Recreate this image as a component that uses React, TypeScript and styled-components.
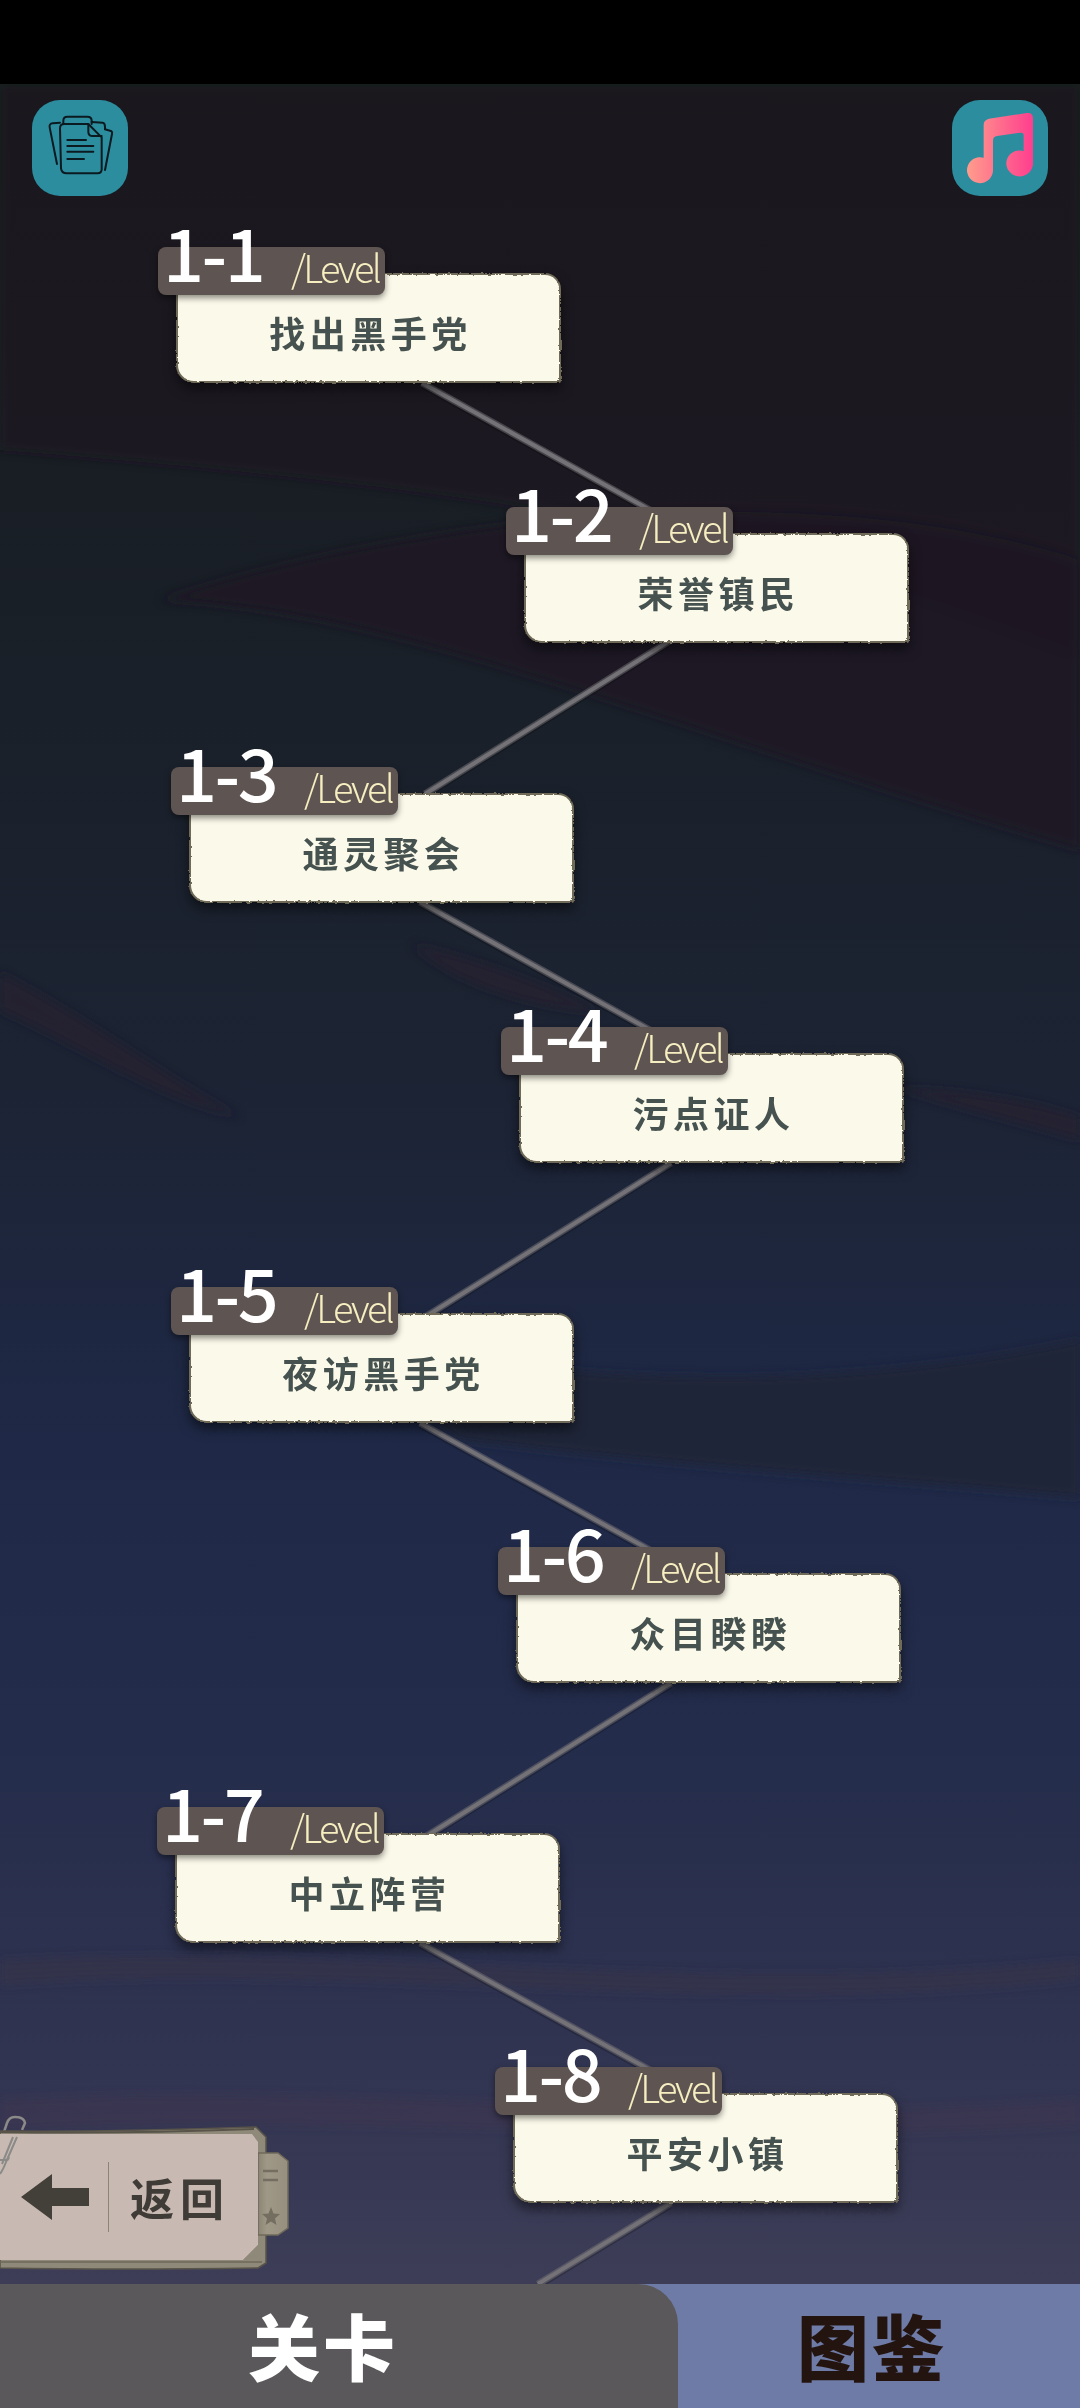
import React from "react";
import styled, { createGlobalStyle } from "styled-components";

const cjk = `"Noto Sans CJK SC", "Noto Sans", sans-serif`;

interface ILevel {
	code: string;
	title: string;
	offset: number;
}

const levels: ILevel[] = [
	{ code: "1-1", title: "找出黑手党", offset: 176 },
	{ code: "1-2", title: "荣誉镇民", offset: 524 },
	{ code: "1-3", title: "通灵聚会", offset: 189 },
	{ code: "1-4", title: "污点证人", offset: 519 },
	{ code: "1-5", title: "夜访黑手党", offset: 189 },
	{ code: "1-6", title: "众目睽睽", offset: 516 },
	{ code: "1-7", title: "中立阵营", offset: 175 },
	{ code: "1-8", title: "平安小镇", offset: 513 },
];

const links = [
	[422, 383, 650, 510],
	[671, 640, 425, 794],
	[420, 902, 650, 1030],
	[671, 1163, 425, 1317],
	[420, 1423, 650, 1550],
	[671, 1683, 425, 1837],
	[420, 1943, 650, 2070],
	[671, 2203, 538, 2284],
];

const GlobalStyle = createGlobalStyle`
	html, body {
		margin: 0;
		padding: 0;
		background: #000;
	}
`;

const Page = styled.div`
	width: 1080px;
	height: 2408px;
	display: grid;
	grid-template-rows: 84px 1fr 124px;
	overflow: hidden;
	font-family: ${cjk};
`;

const StatusBar = styled.div`
	background: #000;
`;

const MapArea = styled.div`
	position: relative;
	overflow: hidden;
	background: linear-gradient(
		180deg,
		#151c1c 0%,
		#181d22 12%,
		#1a2029 28%,
		#1c2333 45%,
		#1f2947 62%,
		#232c4b 75%,
		#2f3350 88%,
		#3d3d57 100%
	);
`;

const Backdrop = styled.svg`
	position: absolute;
	inset: 0;
	width: 100%;
	height: 100%;
`;

const TopBar = styled.div`
	position: relative;
	display: flex;
	justify-content: space-between;
	padding: 16px 32px 0;
`;

const SquareButton = styled.div`
	width: 96px;
	height: 96px;
	border-radius: 28px;
	background: #2c8d9f;
`;

const Nodes = styled.div`
	position: relative;
	display: flex;
	flex-direction: column;
	gap: 150px;
	margin-top: 77px;
`;

const Node = styled.div<{ $offset: number }>`
	position: relative;
	width: 385px;
	height: 110px;
	margin-left: ${(p) => p.$offset}px;
	display: flex;
	align-items: center;
	justify-content: center;
	padding-top: 7px;
	box-sizing: border-box;
`;

const Paper = styled.div`
	position: absolute;
	inset: 0;
	background: #fbf9e9;
	border: 2px solid #6f6a58;
	box-sizing: border-box;
	border-radius: 3px 16px 2px 18px;
	box-shadow: 0 6px 12px rgba(0, 0, 0, 0.5);
	filter: url(#rough);
`;

const Title = styled.span`
	position: relative;
	font-size: 36px;
	font-weight: 700;
	letter-spacing: 4.500px;
	line-height: 1;
	color: #46524f;
	margin-right: -4px;
`;

const Badge = styled.div`
	position: absolute;
	left: -18px;
	top: -26px;
	width: 227px;
	height: 48px;
	border-radius: 8px;
	background: #5e5452;
	box-shadow: 0 3px 6px rgba(0, 0, 0, 0.45);
`;

const Code = styled.span`
	position: absolute;
	left: 5px;
	bottom: 8px;
	font-size: 72px;
	font-weight: 500;
	letter-spacing: -2.500px;
	line-height: 72px;
	color: #fff;
	white-space: nowrap;
`;

const LevelTag = styled.span`
	position: absolute;
	left: 133px;
	bottom: 4px;
	font-size: 38px;
	line-height: 48px;
	font-weight: 300;
	letter-spacing: -2.700px;
	color: #f6eec0;
`;

const BackButton = styled.div`
	position: absolute;
	left: 0;
	top: 2036px;
	width: 290px;
	height: 155px;
`;

const BackArt = styled.svg`
	position: absolute;
	left: 0;
	top: 0;
	overflow: visible;
`;

const BackContent = styled.div`
	position: absolute;
	left: 21px;
	top: 42px;
	display: flex;
	align-items: center;
	height: 70px;
`;

const BackDivider = styled.div`
	width: 1px;
	height: 70px;
	background: #8c8479;
	margin: 0 21px 0 19px;
`;

const BackLabel = styled.span`
	font-size: 44px;
	font-weight: 700;
	letter-spacing: 6px;
	line-height: 1;
	color: #3f3b36;
`;

const TabBar = styled.div`
	background: #6e7ba6;
	display: grid;
	grid-template-columns: 678px 1fr;
`;

const Tab = styled.div<{ $active?: boolean }>`
	display: flex;
	align-items: center;
	justify-content: center;
	font-size: 72px;
	font-weight: 900;
	letter-spacing: 3px;
	line-height: 1;
	padding-bottom: 5px;
	background: ${(p) => (p.$active ? "#5a585a" : "transparent")};
	color: ${(p) => (p.$active ? "#fff" : "#24140f")};
	border-top-right-radius: ${(p) => (p.$active ? "40px" : "0")};
	padding-right: ${(p) => (p.$active ? "32px" : "14px")};
`;

const NotesIcon = () => (
	<svg width="96" height="96" viewBox="66 60 288 288" fill="none" stroke="#0b1a20" strokeWidth="6" strokeLinejoin="round" strokeLinecap="round">
		<path d="M150 128 L128 130 Q117 131 119 142 L141 252" />
		<path d="M245 126 L278 128 Q285 129 285 140 V148" />
		<path d="M285 148 L300 152 Q308 154 306 162 L285 270" />
		<path d="M160 132 V122 Q160 110 172 110 H232 Q245 110 245 122 V132" />
		<path d="M150 145 Q150 132 163 132 H235 L275 172 V268 Q275 280 263 280 H170 Q155 280 153 265 Z" />
		<path d="M235 132 V155 Q235 168 248 168 H275" />
		<path d="M172 180 H228" />
		<path d="M172 198 H250" />
		<path d="M172 215 H250" />
		<path d="M172 237 H222" />
	</svg>
);

const MusicIcon = () => (
	<svg width="96" height="96" viewBox="157 90 288 288">
		<defs>
			<linearGradient id="noteFill" gradientUnits="userSpaceOnUse" x1="201" x2="400" y1="230" y2="230">
				<stop offset="0" stopColor="#ff9d8c" />
				<stop offset="1" stopColor="#ff3e8e" />
			</linearGradient>
		</defs>
		<path
			fill="url(#noteFill)"
			d="M252 165 Q252 150 268 146 L382 129 Q400 127 400 146 V280 A40 39 0 1 1 372 243 V196 Q372 187 363 188 L292 198 Q280 200 280 212 V300 A39 39 0 1 1 252 263 Z"
		/>
	</svg>
);

const BackFrame = () => (
	<BackArt width="290" height="155" viewBox="0 0 290 155">
		<defs>
			<linearGradient id="tabFill" x1="0" x2="1" y1="0" y2="0">
				<stop offset="0" stopColor="#8a8474" />
				<stop offset="0.3" stopColor="#a09887" />
				<stop offset="1" stopColor="#968e7e" />
			</linearGradient>
		</defs>
		<path d="M22 10 L25 3 Q24 -3 15 -3 Q9 -3 7 3 L0 24" fill="none" stroke="#8b8a88" strokeWidth="2.500" />
		<path d="M0 11 Q120 12 256 7 L266 17 V143 L258 148 Q120 150 0 148 Z" fill="#8f897a" stroke="#59544a" strokeWidth="1.500" />
		<path d="M0 142 H262" stroke="#6d6859" strokeWidth="1.500" />
		<path d="M0 12 Q120 14 254 9" fill="none" stroke="#59544a" strokeWidth="2" />
		<path d="M258 33 H278 L288 41 V108 L278 115 H258 Z" fill="url(#tabFill)" stroke="#6f6959" strokeWidth="1.500" />
		<path d="M263 51 H278 M263 60 H278" stroke="#746e60" strokeWidth="2.500" />
		<path d="M271 87 L273.500 93.500 L280 94 L275 98.500 L276.500 105 L271 101.500 L265.500 105 L267 98.500 L262 94 L268.500 93.500 Z" fill="#746e60" />
		<path d="M0 14 H252 L258 22 V125 L243 140 H0 Z" fill="#c8bab2" />
		<path d="M243 140 L258 125 V134 Z" fill="#8f897a" />
		<path d="M17 17 L6 42 Q3 50 0 54 M13 17 L2 44 M0 40 H6 Q8 41 9 37" fill="none" stroke="#8b8a88" strokeWidth="2" />
	</BackArt>
);

const App = () => (
	<Page>
		<GlobalStyle />
		<svg width="0" height="0" style={{ position: "absolute" }}>
			<filter id="rough" x="-3%" y="-10%" width="106%" height="125%">
				<feTurbulence type="fractalNoise" baseFrequency="0.25" numOctaves="2" seed="4" />
				<feDisplacementMap in="SourceGraphic" scale="3" />
			</filter>
			<filter id="soft">
				<feGaussianBlur stdDeviation="5" />
			</filter>
		</svg>
		<StatusBar />
		<MapArea>
			<Backdrop viewBox="0 84 1080 2200" preserveAspectRatio="none">
				<g filter="url(#soft)">
					<path d="M0 84 H1080 V660 C820 560 640 500 0 450 Z" fill="#1b1a20" opacity="0.55" />
					<path d="M160 600 C400 610 640 720 1080 850 V560 C800 470 400 520 160 600 Z" fill="#1c1a22" opacity="0.9" />
					<path d="M0 973 C90 1020 170 1080 240 1117 C160 1100 70 1040 0 1010 Z" fill="#241f30" opacity="0.8" />
					<path d="M413 945 C480 960 560 990 600 1013 C520 1005 450 980 413 945 Z" fill="#241f30" opacity="0.8" />
					<path d="M895 1088 C960 1090 1030 1100 1080 1117 V1140 C1010 1120 950 1105 895 1088 Z" fill="#241f30" opacity="0.8" />
					<path d="M300 1330 C520 1380 800 1400 1080 1340 V1498 C900 1480 700 1470 460 1440 Z" fill="#1f2536" opacity="0.85" />
					<path d="M0 1960 C360 1940 700 2000 1080 1960 V1980 C700 2020 360 1960 0 1985 Z" fill="#3a3048" opacity="0.45" />
					<path d="M0 2100 C360 2080 700 2130 1080 2100 V2125 C700 2150 360 2110 0 2130 Z" fill="#40364e" opacity="0.45" />
				</g>
			</Backdrop>
			<Backdrop viewBox="0 84 1080 2200" preserveAspectRatio="none">
				{links.map(([x1, y1, x2, y2]) => (
					<g key={`${x1}-${y1}`}>
						<line x1={x1} y1={y1 + 3} x2={x2} y2={y2 + 3} stroke="#000" strokeOpacity="0.2" strokeWidth="5" />
						<line x1={x1} y1={y1} x2={x2} y2={y2} stroke="#747276" strokeOpacity="0.5" strokeWidth="7" />
						<line x1={x1} y1={y1} x2={x2} y2={y2} stroke="#747276" strokeWidth="4" />
					</g>
				))}
			</Backdrop>
			<TopBar>
				<SquareButton>
					<NotesIcon />
				</SquareButton>
				<SquareButton>
					<MusicIcon />
				</SquareButton>
			</TopBar>
			<Nodes>
				{levels.map((level) => (
					<Node key={level.code} $offset={level.offset}>
						<Paper />
						<Title>{level.title}</Title>
						<Badge>
							<Code>{level.code}</Code>
							<LevelTag>/Level</LevelTag>
						</Badge>
					</Node>
				))}
			</Nodes>
			<BackButton>
				<BackFrame />
				<BackContent>
					<svg width="68" height="46" viewBox="0 0 68 46">
						<path d="M0 23 L31 0 V14 H68 V32 H31 V46 Z" fill="#433f39" />
					</svg>
					<BackDivider />
					<BackLabel>返回</BackLabel>
				</BackContent>
			</BackButton>
		</MapArea>
		<TabBar>
			<Tab $active>关卡</Tab>
			<Tab>图鉴</Tab>
		</TabBar>
	</Page>
);

export default App;
